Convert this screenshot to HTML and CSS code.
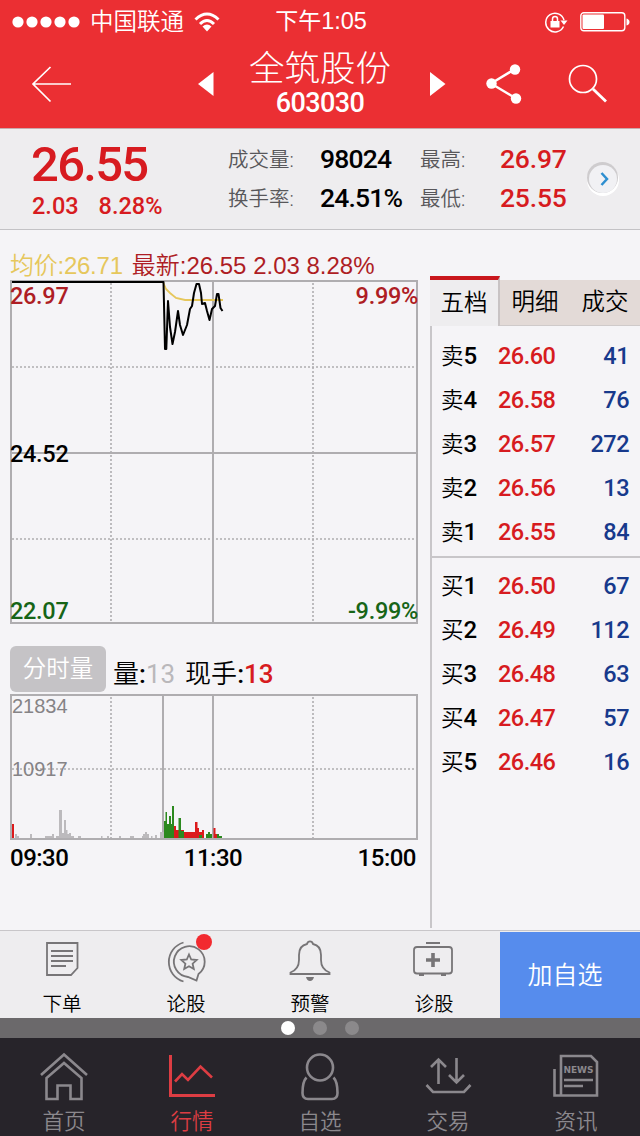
FILE: index.html
```html
<!DOCTYPE html>
<html lang="zh-CN">
<head>
    <meta charset="UTF-8" />
    <meta name="viewport" content="width=device-width, initial-scale=1.0" />
    <title>全筑股份 603030</title>
    <link rel="stylesheet" href="styles.css">
</head>
<body>
    <header class="header">
        <div class="status">
            <div class="carrier">
                <svg width="68" height="12" viewBox="0 0 68 12" fill="#fff">
                    <circle cx="6" cy="6" r="5.6" /><circle cx="20" cy="6" r="5.6" /><circle cx="34" cy="6" r="5.6" /><circle cx="48" cy="6" r="5.6" /><circle cx="62" cy="6" r="5.6" />
                </svg>
                <span class="carrier-name">中国联通</span>
                <svg width="26" height="20" viewBox="0 0 26 20" fill="none" stroke="#fff" stroke-width="3">
                    <path d="M1.5 7.5 Q13 -3.5 24.500 7.500" />
                    <path d="M6 12 Q13 5 20 12" />
                    <path d="M8.500 14.500 Q13 10.500 17.500 14.500 L13 19.500 Z" fill="#fff" stroke="none" />
                </svg>
            </div>
            <div class="time">下午<span>1:05</span></div>
            <div class="battery">
                <svg width="24" height="22" viewBox="0 0 24 22" fill="none" stroke="#fff" stroke-width="1.5">
                    <path d="M19.500 15.500 A9.300 9.300 0 1 1 20 9" />
                    <path d="M16.500 9.500 H23.500 L20 14 Z" fill="#fff" stroke="none" />
                    <rect x="6.500" y="10" width="9" height="6.500" fill="#fff" stroke="none" />
                    <path d="M8.500 10.500 V8 A2.500 2.500 0 0 1 13.500 8 V10.500" />
                </svg>
                <svg width="50" height="20" viewBox="0 0 50 20">
                    <rect x="0.800" y="0.800" width="44" height="18" rx="3" fill="none" stroke="#fff" stroke-width="1.400" />
                    <rect x="2.500" y="2.500" width="21.500" height="14.600" rx="1" fill="#fff" />
                    <path d="M46.500 6.500 Q49.500 7.500 49.500 10 Q49.500 12.500 46.500 13.500 Z" fill="#fff" />
                </svg>
            </div>
        </div>
        <nav class="nav">
            <svg class="back" width="40" height="38" viewBox="0 0 40 38" fill="none" stroke="#fff" stroke-width="1.700">
                <path d="M19.500 2 L2 19 L19.500 36.500 M2 19 H40" />
            </svg>
            <svg class="prev" width="16" height="24" viewBox="0 0 16 24"><path d="M15.500 0 V24 L0 12 Z" fill="#fff" /></svg>
            <div class="stock">
                <h1>全筑股份</h1>
                <p>603030</p>
            </div>
            <svg class="next" width="16" height="24" viewBox="0 0 16 24"><path d="M0 0 V24 L15.500 12 Z" fill="#fff" /></svg>
            <svg class="share" width="36" height="40" viewBox="0 0 36 40" fill="#fff">
                <path d="M29 5 L5 19.500 L30 34.500" fill="none" stroke="#fff" stroke-width="2.400" />
                <circle cx="5.500" cy="19.500" r="5.200" /><circle cx="29" cy="5.500" r="5.200" /><circle cx="30" cy="34.500" r="5.200" />
            </svg>
            <svg class="search" width="40" height="40" viewBox="0 0 40 40" fill="none" stroke="#fff" stroke-width="1.700">
                <circle cx="15" cy="15" r="13.500" />
                <path d="M25 25 L38 37.500" stroke-width="2.800" />
            </svg>
        </nav>
    </header>

    <section class="quote">
        <div class="price">
            <strong>26.55</strong>
            <p><span>2.03</span><span>8.28%</span></p>
        </div>
        <dl class="stats">
            <dt>成交量:</dt><dd>98024</dd>
            <dt>换手率:</dt><dd>24.51%</dd>
        </dl>
        <dl class="stats range">
            <dt>最高:</dt><dd class="red">26.97</dd>
            <dt>最低:</dt><dd class="red">25.55</dd>
        </dl>
        <svg class="more" width="34" height="34" viewBox="0 0 34 34">
            <circle cx="17" cy="18" r="16" fill="#fff" />
            <circle cx="16.500" cy="15.500" r="15.500" fill="#ceccce" />
            <circle cx="17" cy="17" r="14" fill="#f1f1f4" />
            <path d="M15.500 11 L21 17 L15.500 23" fill="none" stroke="#2e8fd0" stroke-width="2.500" />
        </svg>
    </section>

    <main class="content">
        <div class="charts">
            <p class="legend"><span class="avg">均价:26.71</span><span class="last">最新:26.55 2.03 8.28%</span></p>
            <div class="chart price-chart">
                <svg width="408" height="344" viewBox="10 280 408 344" fill="none">
                    <g stroke="#afadb0" stroke-width="2">
                        <rect x="11" y="281" width="406" height="342" />
                        <path d="M213 281 V623 M11 453 H417" />
                        <path d="M111 283 V623 M313 283 V623 M12 367 H417 M12 539 H417" stroke-width="1.600" stroke-dasharray="2 2" />
                    </g>
                    <path d="M163 282 L166 289 L170 293 L176 298 L185 300 H223" stroke="#e6c75c" stroke-width="1.800" />
                    <path d="M12 282 H163.500 L165 349 H166.300 L168 301 L170 327 L172.500 344 L175 332 L178 311 L180 325 L183 335 L187 325 L190 309 L192 306 L194 293 L196.500 284 H199 L201 293 L202 304 L205 303 L207 311 L209.500 320 L212 309 L215 306 L217 294 H218.500 L220.500 308 L222.500 311" stroke="#000" stroke-width="2" stroke-linejoin="round" />
                </svg>
                <span class="label top-left">26.97</span>
                <span class="label top-right">9.99%</span>
                <span class="label middle-left">24.52</span>
                <span class="label bottom-left">22.07</span>
                <span class="label bottom-right">-9.99%</span>
            </div>
            <div class="volume-bar">
                <button class="mode">分时量</button>
                <p>量<b>:</b><b class="muted">13</b></p>
                <p>现手<b>:</b><b class="red">13</b></p>
            </div>
            <div class="chart volume-chart">
                <svg width="408" height="146" viewBox="10 694 408 146" fill="none">
                    <g stroke="#afadb0" stroke-width="2">
                        <path d="M213 695 V839" />
                        <path d="M111 697 V839 M313 697 V839 M12 769 H417" stroke-width="1.600" stroke-dasharray="2 2" />
                        <path d="M163 695 V839" />
                    </g>
                    <g fill="#bcbabd">
                        <path d="M15 838 V834 H17 V836 H19 V838 Z M30 838 V834 H32 V838 Z M45 838 V836 H52 V834 H54 V838 Z M56 838 V836 H59 V810 H62 V833 H64 V820 H66 V830 H67.500 V834 H69 V833 H71 V836 H74 V838 Z" />
                        <path d="M78 836 H81 V838 H78 Z M101 836 H102.500 V838 H101 Z M107 836 H109 V838 H107 Z M119 836 H121 V838 H119 Z M130 836 H134 V838 H130 Z M142 838 V836 H143 V834 H145 V832 H147 V834 H149 V838 Z M151 836 H152.500 V838 H151 Z M155 835 H157 V838 H155 Z M160 838 V832 H164 V838 Z" />
                    </g>
                    <path d="M12 824 H14 V838 H12 Z M174 826 H176 V830 H184 V832 H195 V822 H197.500 V828 H199 V832 H202 V830 H204 V838 H174 Z M213.500 828 H215.500 V834 H217 V838 H213.500 Z" fill="#dc1a1c" />
                    <path d="M164 838 V821 H165.500 V812 H167 V824 H169 V816 H171 V824 H172 V806 H174 V838 Z M178.500 838 V818 H181 V831 H184 V838 Z M199 835 H202 V838 H199 Z M206 838 V834 H208 V832 H210 V834 H212 V838 Z M217 838 V834 H219 V836 H222 V838 Z" fill="#2c891f" />
                    <rect x="11" y="695" width="406" height="144" stroke="#afadb0" stroke-width="2" />
                </svg>
                <span class="scale scale-top">21834</span>
                <span class="scale scale-middle">10917</span>
            </div>
            <div class="axis"><span>09:30</span><span>11:30</span><span>15:00</span></div>
        </div>

        <aside class="book">
            <div class="book-tabs">
                <span class="active">五档</span><span>明细</span><span>成交</span>
            </div>
            <ul class="levels sell">
                <li><span>卖<b>5</b></span><em>26.60</em><i>41</i></li>
                <li><span>卖<b>4</b></span><em>26.58</em><i>76</i></li>
                <li><span>卖<b>3</b></span><em>26.57</em><i>272</i></li>
                <li><span>卖<b>2</b></span><em>26.56</em><i>13</i></li>
                <li><span>卖<b>1</b></span><em>26.55</em><i>84</i></li>
            </ul>
            <ul class="levels buy">
                <li><span>买<b>1</b></span><em>26.50</em><i>67</i></li>
                <li><span>买<b>2</b></span><em>26.49</em><i>112</i></li>
                <li><span>买<b>3</b></span><em>26.48</em><i>63</i></li>
                <li><span>买<b>4</b></span><em>26.47</em><i>57</i></li>
                <li><span>买<b>5</b></span><em>26.46</em><i>16</i></li>
            </ul>
        </aside>
    </main>

    <div class="actions">
        <div class="action">
            <svg width="50" height="50" viewBox="37 936 50 50">
                <path d="M47 943 H77.500 V968 L71 975 H47 Z M51 951 H73 M51 956 H73 M51 961 H73 M51 966 H66" />
            </svg>
            <span>下单</span>
        </div>
        <div class="action">
            <svg width="50" height="50" viewBox="161 936 50 50">
                <path d="M183.500 942.500 A20.300 20.300 0 0 0 183.500 981.500" />
                <path d="M196.500 980.500 L198.500 974 A15.400 15.400 0 1 0 188 977 Z" />
                <path d="M189 954.500 L191.200 959.500 L196.700 960 L192.600 963.700 L193.800 969 L189 966.300 L184.200 969 L185.400 963.700 L181.300 960 L186.800 959.500 Z" />
            </svg>
            <span>论股</span>
            <i class="dot"></i>
        </div>
        <div class="action">
            <svg width="50" height="50" viewBox="285 936 50 50">
                <path d="M290.500 974 H329.500 V972.500 C323 970 321 966 321 960 V955 C321 948 318 945 313 944 C312 940.500 308 940.500 307 944 C302 945 299 948 299 955 V960 C299 966 297 970 290.500 972.500 Z" />
                <path d="M306 977 H314 Q313 981 310 981 Q307 981 306 977 Z" fill="#777577" stroke="none" />
            </svg>
            <span>预警</span>
        </div>
        <div class="action">
            <svg width="50" height="50" viewBox="409 936 50 50">
                <rect x="414" y="947" width="38" height="26.500" rx="3" />
                <path d="M426 943 H440 M419 975 H424 M441 975 H446" />
                <path d="M433 953 V967 M426 960 H440" stroke-width="3.600" />
            </svg>
            <span>诊股</span>
        </div>
        <button class="add">加自选</button>
    </div>

    <div class="pager"><i class="on"></i><i></i><i></i></div>

    <footer class="tabbar">
        <div class="tab">
            <svg width="60" height="56" viewBox="34 1048 60 56">
                <path d="M41 1075 L64 1054.500 L87 1075" />
                <path d="M46.500 1078 V1099 H57.500 V1085.500 H70.500 V1099 H81.500 V1078 L64 1063 Z" />
            </svg>
            <span>首页</span>
        </div>
        <div class="tab current">
            <svg width="60" height="56" viewBox="162 1048 60 56">
                <path d="M170.500 1055 V1095.500 H215" stroke-width="3" />
                <path d="M175 1081.500 L182 1074 L188 1080 L200.500 1066.500 L212 1077.500" />
            </svg>
            <span>行情</span>
        </div>
        <div class="tab">
            <svg width="60" height="56" viewBox="290 1048 60 56">
                <circle cx="320" cy="1067.500" r="13" />
                <path d="M306.500 1077.500 C303 1081 302.500 1086 302.500 1093 Q302.500 1099 308 1099 H332 Q337.500 1099 337.500 1093 C337.500 1086 337 1081 333.500 1077.500" />
            </svg>
            <span>自选</span>
        </div>
        <div class="tab">
            <svg width="60" height="56" viewBox="418 1048 60 56">
                <path d="M438.500 1084 V1060 M431 1067 L438.500 1059.500 L446 1067 M456.500 1058 V1083 M449 1075 L456.500 1082.500 L464 1075" />
                <path d="M426.500 1085 L433 1092 H464 L470.500 1085" />
            </svg>
            <span>交易</span>
        </div>
        <div class="tab">
            <svg width="60" height="56" viewBox="546 1048 60 56">
                <path d="M561 1095.500 V1056 H591 L597 1062 V1095.500 H554.500 V1069" />
                <path d="M564 1080 H593 M564 1086 H583" />
                <text x="563.500" y="1073" textLength="30">NEWS</text>
            </svg>
            <span>资讯</span>
        </div>
    </footer>
</body>
</html>
```

FILE: styles.css
```css
* {
    box-sizing: border-box;
    margin: 0;
    padding: 0;
}
body {
    width: 640px;
    height: 1136px;
    overflow: hidden;
    background-color: #f5f4f7;
    font-family: Roboto, "Noto Sans CJK SC", sans-serif;
    font-weight: 350;
    color: black;
}
svg {
    display: block;
    flex: none;
}
i, em {
    font-style: normal;
}
b {
    font-weight: 500;
}
button {
    border: none;
    font: inherit;
    color: white;
}
.red {
    color: #d71b20;
}

/* header */
.header {
    height: 128px;
    background-color: #eb2f33;
    color: white;
}
.status {
    display: grid;
    grid-template-columns: 1fr 100px 1fr;
    align-items: center;
    height: 40px;
    padding: 0 10px 0 12px;
}
.carrier {
    display: flex;
    align-items: center;
    gap: 10px;
}
.carrier-name {
    font-size: 23.500px;
    line-height: 40px;
}
.time {
    font-size: 23px;
    line-height: 42px;
    white-space: nowrap;
    text-align: center;
    font-weight: 400;
}
.time span {
    font-family: "Liberation Sans", sans-serif;
    font-size: 23.500px;
}
.battery {
    display: flex;
    justify-content: flex-end;
    align-items: center;
    gap: 12px;
}
.nav {
    display: flex;
    align-items: center;
    height: 88px;
    padding-left: 31px;
}
.prev {
    margin-left: 127px;
}
.stock {
    width: 212px;
    text-align: center;
}
.stock h1 {
    font-size: 35.500px;
    font-weight: 300;
    line-height: 40px;
    margin-top: 7px;
}
.stock p {
    font-size: 27px;
    font-weight: 500;
    letter-spacing: -0.600px;
    line-height: 28px;
    margin-bottom: 9px;
}
.next {
    margin-left: 4px;
}
.share {
    margin-left: 40px;
}
.search {
    margin-left: 46px;
}

/* quote summary */
.quote {
    display: flex;
    height: 102px;
    background-color: #eeedef;
    border-top: 1px solid #c9a9ad;
    border-bottom: 1px solid #c3c2c5;
}
.price {
    width: 228px;
    padding: 10px 0 0 31px;
    color: #d71b20;
}
.price strong {
    display: block;
    font-size: 49px;
    font-weight: 500;
    line-height: 52px;
    letter-spacing: -1.700px;
}
.price p {
    display: flex;
    gap: 20px;
    padding-left: 1px;
    font-size: 23.500px;
    font-weight: 500;
    line-height: 30px;
}
.stats {
    display: grid;
    grid-template-columns: 92px 1fr;
    grid-auto-rows: 39px;
    width: 192px;
    padding-top: 11px;
}
.stats dt {
    font-size: 20.500px;
    line-height: 40px;
    color: #58575a;
}
.stats dd {
    font-size: 26.500px;
    font-weight: 500;
    line-height: 37px;
    letter-spacing: -0.800px;
}
.range {
    grid-template-columns: 80px 1fr;
    width: 166px;
}
.range dd {
    letter-spacing: -0.200px;
}
.more {
    margin-top: 33px;
}

/* charts */
.content {
    display: flex;
    height: 700px;
}
.charts {
    width: 430px;
    padding-left: 10px;
}
.legend {
    display: flex;
    gap: 9px;
    height: 50px;
    padding-top: 17px;
    font-family: "Liberation Sans", "Noto Sans CJK SC", sans-serif;
    font-size: 24px;
    line-height: 37px;
    white-space: nowrap;
}
.avg {
    letter-spacing: -0.250px;
    color: #e6c75c;
}
.last {
    color: #ae1d24;
}
.chart {
    position: relative;
    width: 408px;
}
.label, .scale {
    position: absolute;
    line-height: 24px;
}
.label {
    font-size: 23.500px;
    font-weight: 500;
    letter-spacing: -0.300px;
}
.top-left {
    top: 4px;
    left: 0;
    color: #ae1d24;
}
.top-right {
    top: 4px;
    right: 0;
    color: #ae1d24;
}
.middle-left {
    top: 162px;
    left: 0;
}
.bottom-left {
    top: 319px;
    left: 0;
    color: #176517;
}
.bottom-right {
    top: 319px;
    right: 0;
    color: #176517;
}
.volume-bar {
    display: flex;
    height: 70px;
    padding-top: 22px;
}
.mode {
    width: 96px;
    height: 46px;
    margin-right: 7px;
    border-radius: 6px;
    background-color: #c5c3c6;
    font-size: 23.500px;
    line-height: 46px;
}
.volume-bar p {
    margin-right: 10px;
    font-size: 26px;
    line-height: 56px;
}
.muted {
    color: #bab8bb;
    font-weight: 400;
}
.scale {
    font-family: "Liberation Sans", sans-serif;
    font-size: 20px;
    color: #858386;
}
.scale-top {
    top: 0;
    left: 2px;
}
.scale-middle {
    top: 63px;
    left: 2px;
}
.axis {
    display: flex;
    justify-content: space-between;
    width: 406px;
    font-size: 24px;
    font-weight: 500;
    letter-spacing: -0.500px;
    line-height: 36px;
}

/* order book */
.book {
    width: 210px;
    height: 652px;
    margin-top: 46px;
    border-left: 2px solid #c8c6c9;
}
.book-tabs {
    display: flex;
    height: 50px;
    margin-left: -2px;
    background: linear-gradient(#f5f4f7 4px, #e3dad7 4px);
    font-size: 23.500px;
    line-height: 46px;
}
.book-tabs span {
    width: 70px;
    padding-top: 3px;
    border-bottom: 1px solid #cfcaca;
    text-align: center;
}
.book-tabs .active {
    padding-top: 0;
    border-top: 4px solid #c9171d;
    border-right: 2px solid #c8c3c4;
    border-bottom: none;
    background-color: #eeedef;
}
.levels {
    list-style: none;
}
.sell {
    height: 232px;
    padding-top: 8px;
    border-bottom: 2px solid #c8c6c9;
}
.buy {
    padding-top: 6px;
}
.levels li {
    display: grid;
    grid-template-columns: 57px 70px 1fr;
    height: 44px;
    padding: 0 11px 0 9px;
    font-size: 23.500px;
    line-height: 44px;
}
.levels span {
    font-size: 22.500px;
}
.levels b {
    font-size: 24px;
}
.levels em {
    font-weight: 500;
    letter-spacing: -0.500px;
    color: #d71b20;
}
.levels i {
    font-weight: 500;
    letter-spacing: -0.500px;
    text-align: right;
    color: #17398c;
}

/* bottom actions */
.actions {
    display: flex;
    height: 88px;
    border-top: 1px solid #c8c6c9;
    background-color: #eeedef;
}
.action {
    position: relative;
    display: flex;
    flex-direction: column;
    align-items: center;
    width: 124px;
    padding-top: 5px;
    font-size: 19.500px;
    line-height: 38px;
}
.action svg {
    fill: none;
    stroke: #777577;
    stroke-width: 1.800;
}
.dot {
    position: absolute;
    top: 3px;
    left: 72px;
    width: 16px;
    height: 16px;
    border-radius: 50%;
    background-color: #f22a2f;
}
.add {
    width: 140px;
    height: 86px;
    margin: 1px 0 0 4px;
    padding: 0 10px 4px 0;
    background-color: #568ced;
    font-size: 25px;
}
.pager {
    display: flex;
    justify-content: center;
    align-items: center;
    gap: 18px;
    height: 20px;
    background-color: #6b696b;
}
.pager i {
    width: 14px;
    height: 14px;
    border-radius: 50%;
    background-color: #8b898b;
}
.pager .on {
    background-color: white;
}
.tabbar {
    display: flex;
    height: 98px;
    padding-top: 10px;
    background-color: #27242a;
    color: #8b888d;
}
.tab {
    display: flex;
    flex-direction: column;
    align-items: center;
    width: 128px;
    font-size: 21.500px;
    line-height: 36px;
}
.tab svg {
    fill: none;
    stroke: currentColor;
    stroke-width: 2.600;
}
.tab text {
    fill: currentColor;
    stroke: none;
    font-family: "DejaVu Sans", sans-serif;
    font-size: 9px;
    font-weight: 700;
}
.current {
    color: #dd3d43;
}
```
